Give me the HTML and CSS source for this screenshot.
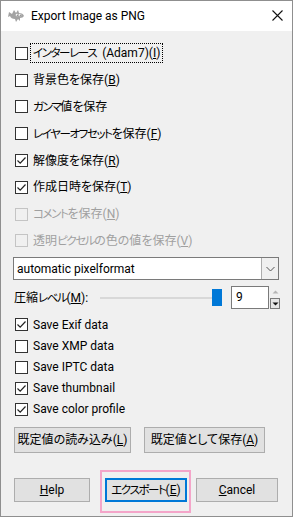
FILE: index.html
```html
<!DOCTYPE html>
<html lang="ja">
<head>
<meta charset="utf-8">
<title>Export Image as PNG</title>
<link rel="stylesheet" href="styles.css">
</head>
<body>
<div class="window">
  <div class="titlebar">
    <svg class="app-icon" width="17" height="14" viewBox="0 0 17 14">
      <path d="M1 3 L4 5 L6 1 L8 4 L10 1 L11 4 Q15 4 16 7 Q15 9 12 9 L12 12 L10 10 L8 13 L7 10 Q3 10 2 7 L0 8 Z" fill="#a3a3a3"/>
      <circle cx="9" cy="6" r="1.3" fill="#fff"/>
      <circle cx="12" cy="6" r="1.3" fill="#fff"/>
      <circle cx="9.3" cy="6.2" r="0.6" fill="#555"/>
      <circle cx="12.3" cy="6.2" r="0.6" fill="#555"/>
    </svg>
    <span class="title">Export Image as PNG</span>
    <svg class="close" width="11" height="11" viewBox="0 0 11 11">
      <path d="M0.5 0.5 L10.5 10.5 M10.5 0.5 L0.5 10.5" stroke="#111" stroke-width="1.1" fill="none"/>
    </svg>
  </div>
  <div class="content">
    <div class="group1">
      <div class="check-row"><span class="box"></span><span class="label focus"><span class="k">インターレース</span><span class="sp"> </span>(Adam7)(<u>I</u>)</span></div>
      <div class="check-row"><span class="box"></span><span class="label">背景色を保存(<u>B</u>)</span></div>
      <div class="check-row"><span class="box"></span><span class="label"><span class="k">ガンマ</span>値を保存</span></div>
      <div class="check-row"><span class="box"></span><span class="label"><span class="k">レイヤーオフセット</span>を保存(<u>F</u>)</span></div>
      <div class="check-row"><span class="box checked"><svg width="11" height="11" viewBox="0 0 11 11"><path d="M1.5 5.5 L4.2 8.2 L9.5 2.5" stroke="#222" stroke-width="1.2" fill="none"/></svg></span><span class="label">解像度を保存(<u>R</u>)</span></div>
      <div class="check-row"><span class="box checked"><svg width="11" height="11" viewBox="0 0 11 11"><path d="M1.5 5.5 L4.2 8.2 L9.5 2.5" stroke="#222" stroke-width="1.2" fill="none"/></svg></span><span class="label">作成日時を保存(<u>T</u>)</span></div>
      <div class="check-row disabled"><span class="box"></span><span class="label"><span class="k">コメント</span>を保存(<u>N</u>)</span></div>
      <div class="check-row disabled"><span class="box"></span><span class="label">透明<span class="k">ピクセル</span>の色の値を保存(<u>V</u>)</span></div>
    </div>

    <div class="combo">
      <span class="combo-text">automatic pixelformat</span>
      <span class="combo-btn"><svg width="9" height="6" viewBox="0 0 9 6"><path d="M0.5 1 L4.5 5 L8.5 1" stroke="#555" stroke-width="1" fill="none"/></svg></span>
    </div>

    <div class="compress-row">
      <span class="compress-label">圧縮<span class="k">レベル</span>(<u>M</u>):</span>
      <div class="slider"><span class="track"></span><span class="thumb"></span></div>
      <div class="spin">
        <span class="spin-input">9</span>
        <span class="spin-btns">
          <span class="spin-btn up"><svg width="7" height="4" viewBox="0 0 7 4"><path d="M0.5 3.5 L3.5 0.5 L6.5 3.5 Z" fill="#b5b5b5"/></svg></span>
          <span class="spin-btn down"><svg width="7" height="4" viewBox="0 0 7 4"><path d="M0.5 0.5 L3.5 3.5 L6.5 0.5 Z" fill="#111"/></svg></span>
        </span>
      </div>
    </div>

    <div class="group2">
      <div class="check-row small"><span class="box checked"><svg width="11" height="11" viewBox="0 0 11 11"><path d="M1.5 5.5 L4.2 8.2 L9.5 2.5" stroke="#222" stroke-width="1.2" fill="none"/></svg></span><span class="label">Save Exif data</span></div>
      <div class="check-row small"><span class="box"></span><span class="label">Save XMP data</span></div>
      <div class="check-row small"><span class="box"></span><span class="label">Save IPTC data</span></div>
      <div class="check-row small"><span class="box checked"><svg width="11" height="11" viewBox="0 0 11 11"><path d="M1.5 5.5 L4.2 8.2 L9.5 2.5" stroke="#222" stroke-width="1.2" fill="none"/></svg></span><span class="label">Save thumbnail</span></div>
      <div class="check-row small"><span class="box checked"><svg width="11" height="11" viewBox="0 0 11 11"><path d="M1.5 5.5 L4.2 8.2 L9.5 2.5" stroke="#222" stroke-width="1.2" fill="none"/></svg></span><span class="label">Save color profile</span></div>
    </div>

    <div class="defaults-row">
      <button class="btn btn-load">既定値の読み込み(<u>L</u>)</button>
      <button class="btn btn-save">既定値として保存(<u>A</u>)</button>
    </div>

    <div class="action-row">
      <button class="btn btn-help"><u>H</u>elp</button>
      <div class="export-wrap">
        <button class="btn btn-export"><span class="k">エクスポート</span>(<u>E</u>)</button>
        <span class="highlight"></span>
      </div>
      <button class="btn btn-cancel"><u>C</u>ancel</button>
    </div>
  </div>
</div>
</body>
</html>
```

FILE: styles.css
```css
* { box-sizing: border-box; }
html, body { margin: 0; padding: 0; }
body {
  background: #f0f0f0;
  font-family: Roboto, "Noto Sans CJK JP", sans-serif;
  font-size: 12px;
  color: #000;
  font-feature-settings: "palt";
}
.k {
  font-size: 11.5px;
  letter-spacing: -1.4px;
}
.sp { margin-left: 3px; }
.window {
  width: 293px;
  height: 517px;
  border: 1px solid #8f8f8f;
  background: #f0f0f0;
  display: flex;
  flex-direction: column;
}
.titlebar {
  height: 30px;
  background: #fff;
  display: flex;
  align-items: center;
  padding-left: 7px;
  flex-shrink: 0;
}
.app-icon { margin-top: -1px; }
.title {
  margin-left: 6px;
  font-size: 12px;
  line-height: 16px;
  margin-top: -1px;
}
.close { margin-left: auto; margin-right: 9px; margin-top: -1px; }

.content {
  flex: 1;
  padding: 9px 13px 0 12px;
}
.check-row {
  height: 26.8px;
  display: flex;
  align-items: center;
  padding-left: 2px;
}
.check-row.small { height: 21.1px; }
.box {
  width: 13px;
  height: 13px;
  border: 1px solid #333;
  background: #fff;
  display: flex;
  align-items: center;
  justify-content: center;
  flex-shrink: 0;
}
.label {
  margin-left: 5px;
  line-height: 16px;
  white-space: nowrap;
}
.label.focus {
  margin-left: 3px;
  padding: 1px 2px;
  outline: 1px dotted #000;
}
.check-row.disabled .box { border-color: #c4c4c4; background: #f0f0f0; }
.check-row.disabled .label { color: #a0a0a0; }

.combo {
  margin-top: 3px;
  height: 23px;
  background: #fff;
  border: 1px solid #7a7a7a;
  display: flex;
  align-items: center;
}
.combo-text { padding-left: 3px; line-height: 16px; }
.combo-btn {
  margin-left: auto;
  width: 17px;
  height: 21px;
  border-left: 1px solid #adadad;
  background: #f0f0f0;
  display: flex;
  align-items: center;
  justify-content: center;
}

.compress-row {
  margin-top: 6px;
  height: 23px;
  display: flex;
  align-items: center;
}
.compress-label {
  margin-left: 1px;
  width: 86px;
  line-height: 16px;
  white-space: nowrap;
  flex-shrink: 0;
}
.slider {
  width: 122px;
  height: 17px;
  display: flex;
  align-items: center;
}
.track {
  width: 113px;
  height: 2px;
  background: #d8d8d8;
}
.thumb {
  width: 10px;
  height: 17px;
  background: #0078d7;
  margin-left: -1px;
}
.spin {
  margin-left: 9px;
  display: flex;
  height: 23px;
}
.spin-input {
  width: 38px;
  height: 23px;
  background: #fff;
  border: 1px solid #7a7a7a;
  padding-left: 4px;
  line-height: 21px;
}
.spin-btns {
  margin-left: 1px;
  display: flex;
  flex-direction: column;
  width: 10px;
}
.spin-btn {
  height: 11.5px;
  display: flex;
  align-items: center;
  justify-content: center;
  background: #f0f0f0;
}
.spin-btn.down { border: 1px solid #7a7a7a; background: #e6e6e6; }

.group2 { margin-top: 5px; }

.btn {
  font: inherit;
  font-feature-settings: "palt";
  color: #000;
  background: #e1e1e1;
  border: 1px solid #adadad;
  padding: 0;
  margin: 0;
  line-height: 16px;
  white-space: nowrap;
}
.defaults-row {
  margin-top: 7px;
  display: flex;
  height: 26px;
  padding-left: 1px;
}
.btn-load { width: 117px; height: 26px; }
.btn-save { width: 121px; height: 26px; margin-left: 13px; }

.action-row {
  margin-top: 25px;
  display: flex;
  height: 24px;
  padding-left: 1px;
}
.btn-help { width: 76px; height: 24px; }
.export-wrap {
  position: relative;
  margin-left: 15px;
  width: 82px;
  height: 24px;
}
.btn-export {
  width: 82px;
  height: 24px;
  border: 2px solid #0078d7;
}
.highlight {
  position: absolute;
  left: -5px;
  top: -8px;
  width: 91px;
  height: 43px;
  border: 2px solid #f4a5c9;
  pointer-events: none;
}
.btn-cancel { width: 82px; height: 24px; margin-left: 9px; }
```
